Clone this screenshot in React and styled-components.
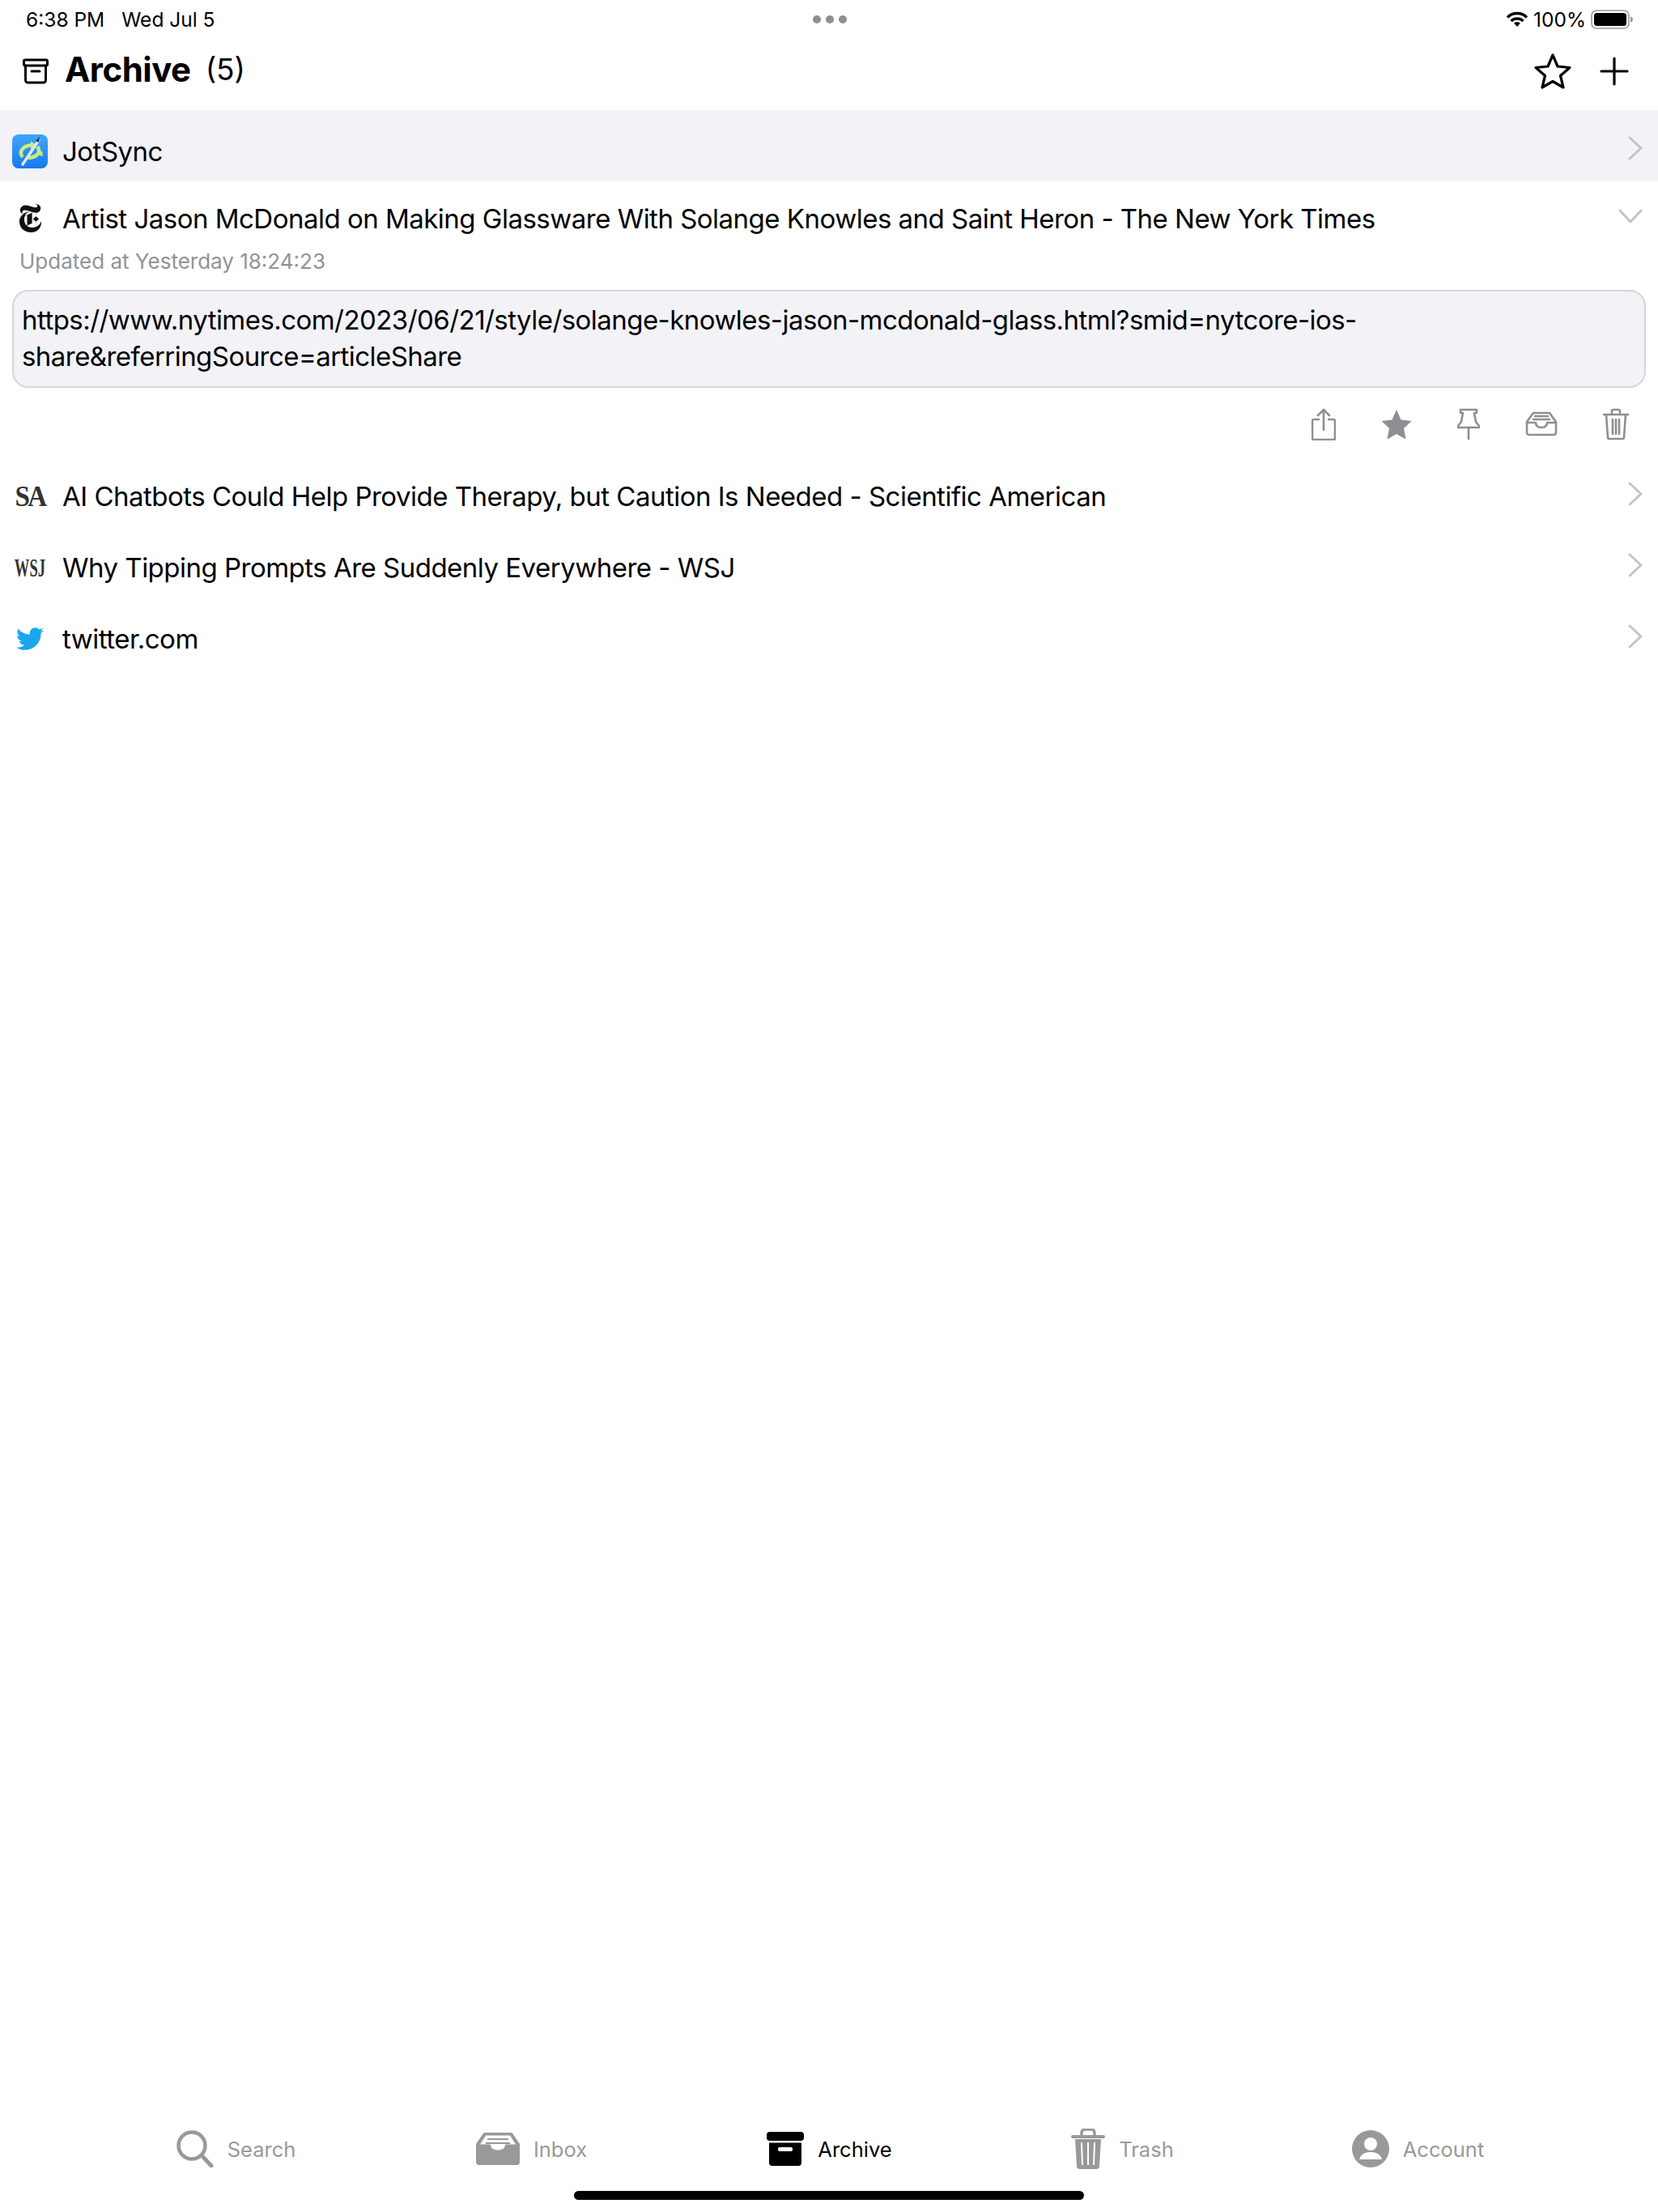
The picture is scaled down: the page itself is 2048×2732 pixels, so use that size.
import React from 'react';
import styled, { createGlobalStyle } from 'styled-components';
import { SiNewyorktimes } from 'react-icons/si';
import { FaTwitter } from 'react-icons/fa';

const Global = createGlobalStyle`
  html, body { margin: 0; padding: 0; background: #fff; }
  body { font-family: Inter, "Liberation Sans", sans-serif; color: #000; }
`;

const Page = styled.div`
  position: relative; width: 2048px; height: 2732px; display: flex; flex-direction: column; overflow: hidden;
`;
const StatusBar = styled.div`
  height: 48px; display: grid; grid-template-columns: 1fr auto 1fr; align-items: center;
  padding: 0 31px 0 32px; font-size: 24.5px;
`;
const StatusLeft = styled.div`display: flex; gap: 21px;`;
const Dots = styled.div`display: flex; gap: 6px;`;
const Dot = styled.span`width: 10px; height: 10px; border-radius: 50%; background: #8e8e93;`;
const StatusRight = styled.div`display: flex; justify-content: flex-end; align-items: center; gap: 6px;`;
const Header = styled.header`
  height: 88px; box-sizing: border-box; display: flex; align-items: center; padding: 0 36px 8px 28px;
`;
const TitleIcon = styled.svg`width: 32px; height: 38px; margin: 0 20px 3px 0;`;
const Title = styled.h1`margin: 0 0 6px; font-size: 42px; font-weight: 700; letter-spacing: -0.5px;`;
const Count = styled.span`margin: 0 0 6px 18px; font-size: 37px;`;
const HeaderActions = styled.div`margin-left: auto; display: flex; align-items: center; gap: 35px;`;
const List = styled.div`flex: 1; display: flex; flex-direction: column;`;
const Row = styled.div`
  height: 88px; box-sizing: border-box; display: flex; align-items: center;
  padding: ${p => p.$top || 0}px 19px 0 14px;
  background: ${p => p.$shaded ? '#f2f2f7' : '#fff'};
`;
const LogoSlot = styled.div`
  width: 46px; height: 46px; margin-right: 17px; display: flex; align-items: center; justify-content: center; flex: none;
`;
const RowTitle = styled.div`flex: 1; font-size: 33px; letter-spacing: -0.51px; white-space: nowrap;`;
const SerifLogo = styled.span`
  font-family: "Liberation Serif", serif; font-weight: 700; color: #333; font-size: ${p => p.$size}px;
  letter-spacing: ${p => p.$spacing}px; transform: scaleX(${p => p.$sx}); white-space: nowrap; line-height: 1;
`;
const Expanded = styled.div`display: flex; flex-direction: column; padding: 0 15px 0 15px;`;
const Updated = styled.div`margin: -6px 0 0 9px; font-size: 26px; color: #929297; height: 34px; line-height: 34px;`;
const UrlBox = styled.div`
  margin-top: 18px; height: 121px; box-sizing: border-box; padding: 13px 10px; border: 2px solid #d6d6da; border-radius: 20px;
  background: #f2f2f7; font-size: 33px; letter-spacing: -0.55px; line-height: 45px; white-space: nowrap;
`;
const Actions = styled.div`
  height: 90px; display: flex; justify-content: flex-end; align-items: center; gap: 56px; padding-right: 21px;
`;
const TabBar = styled.nav`
  height: 132px; display: grid; grid-template-columns: repeat(5, 365px); padding: 0 112px 0 109px;
`;
const Tab = styled.div`
  display: flex; align-items: center; justify-content: center; gap: 17px; height: 108px;
  padding-left: ${p => p.$active ? 6 : 0}px;
  font-size: 25.5px; color: ${p => p.$active ? '#000' : '#999'};
`;
const Home = styled.div`
  position: absolute; top: 2706px; left: 709px; width: 630px; height: 11px; border-radius: 6px; background: #000;
`;
const NavChevron = styled.svg`flex: none; margin-bottom: ${p => p.$lift ?? 6}px;`;

const grey = '#8e8e93';

const ChevronRight = ({ lift }) => (
  <NavChevron $lift={lift} width="18" height="30" viewBox="0 0 18 30" fill="none" stroke="#c4c4c6" strokeWidth="3" strokeLinecap="round" strokeLinejoin="round"><path d="M2 2l14 13L2 28" /></NavChevron>
);
const ChevronDown = () => (
  <NavChevron width="30" height="18" viewBox="0 0 30 18" fill="none" stroke="#c4c4c6" strokeWidth="3" strokeLinecap="round" strokeLinejoin="round"><path d="M2 2l13 14L28 2" /></NavChevron>
);

const JotSyncIcon = () => (
  <svg width="44" height="42" viewBox="0 0 44 42">
    <defs><linearGradient id="js" x1="0" y1="0" x2="0" y2="1"><stop offset="0" stopColor="#3fa6fb" /><stop offset="1" stopColor="#1579ee" /></linearGradient></defs>
    <rect width="44" height="42" rx="8" fill="url(#js)" />
    <path d="M13 28C8 22 12 14 25 13" fill="none" stroke="#c9ee7a" strokeWidth="4.500" />
    <path d="M23 8l7 5.500-7 4.500z" fill="#c9ee7a" />
    <path d="M31 15c5 6 1 13-11 14" fill="none" stroke="#c9ee7a" strokeWidth="4.500" />
    <path d="M31 25l6-5 1 7z" fill="#c9ee7a" />
    <path d="M33 7L13 37" stroke="#e4e7ee" strokeWidth="3.500" strokeLinecap="round" />
    <path d="M34 3l-1 7-4-2z" fill="#15306e" />
  </svg>
);

const StatusIcons = () => (
  <>
    <svg width="28" height="20" viewBox="0 0 28 20" fill="none" stroke="#000" strokeWidth="3.400">
      <path d="M2 7.500a17 17 0 0 1 24 0M6.500 12a11 11 0 0 1 15 0" />
      <path d="M10 14.500a6 6 0 0 1 8 0L14 19z" fill="#000" stroke="none" />
    </svg>
    <span>100%</span>
    <svg width="52" height="24" viewBox="0 0 52 24">
      <rect x="1" y="1" width="46" height="22" rx="6" fill="none" stroke="#999" strokeWidth="1.600" />
      <rect x="4" y="4" width="40" height="16" rx="3.500" fill="#000" />
      <path d="M49 8.500c2 .5 3 2 3 3.500s-1 3-3 3.500z" fill="#999" />
    </svg>
  </>
);

const ActionIcon = ({ children, w = 36 }) => (
  <svg width={w} height="40" viewBox={`0 0 ${w} 40`} fill="none" stroke={grey} strokeWidth="2.600" strokeLinecap="round" strokeLinejoin="round">{children}</svg>
);

const TabIcon = ({ w, h, children }) => (
  <svg width={w} height={h} viewBox={`0 0 ${w} ${h}`}>{children}</svg>
);

const items = [
  { label: 'Search', w: 46, h: 46, icon: <g fill="none" stroke="#999" strokeLinecap="round"><circle cx="19" cy="19" r="16.500" strokeWidth="4.500" /><path d="M31 31l12 13" strokeWidth="5" /></g> },
  { label: 'Inbox', w: 54, h: 40, icon: <g fill="#999"><path d="M11 0h32a3 3 0 0 1 2.500 1.400L54 14v22a4 4 0 0 1-4 4H4a4 4 0 0 1-4-4V14L8.500 1.400A3 3 0 0 1 11 0z" /><path d="M12 3.500h30l7 11H36c0 5-4 7-9 7s-9-2-9-7H5z" fill="#fff" /><path d="M14 8h26M12 13h30" stroke="#999" strokeWidth="2" /></g> },
  { label: 'Archive', active: true, w: 46, h: 42, icon: <g fill="#000"><rect width="46" height="11" rx="4" /><path d="M3 13.500h40V38a4 4 0 0 1-4 4H7a4 4 0 0 1-4-4z" /><rect x="14" y="19" width="18" height="5" rx="2" fill="#fff" /></g> },
  { label: 'Trash', w: 42, h: 50, icon: <g fill="#999"><path d="M13 8V5a4 4 0 0 1 4-4h8a4 4 0 0 1 4 4v3" fill="none" stroke="#999" strokeWidth="3.500" /><rect y="8" width="42" height="4" rx="2" /><path d="M5 13h32l-2 33a4 4 0 0 1-4 4H11a4 4 0 0 1-4-4z" /><path d="M13 17l1 28M21 17v28M29 17l-1 28" stroke="#fff" strokeWidth="2" /></g> },
  { label: 'Account', w: 46, h: 46, icon: <g><circle cx="23" cy="23" r="23" fill="#999" /><circle cx="23" cy="17" r="8" fill="#fff" /><path d="M9 36c2-7 8-9 14-9s12 2 14 9z" fill="#fff" /></g> },
];

export default function App() {
  return (
    <Page>
      <Global />
      <StatusBar>
        <StatusLeft><span>6:38 PM</span><span>Wed Jul 5</span></StatusLeft>
        <Dots><Dot /><Dot /><Dot /></Dots>
        <StatusRight><StatusIcons /></StatusRight>
      </StatusBar>
      <Header>
        <TitleIcon viewBox="0 0 32 38" fill="none" stroke="#000" strokeWidth="3" strokeLinejoin="round" strokeLinecap="round">
          <rect x="1.500" y="6" width="29" height="7" rx="1.500" />
          <path d="M3.500 13v18a3 3 0 0 0 3 3h19a3 3 0 0 0 3-3V13M11 20h10" />
        </TitleIcon>
        <Title>Archive</Title>
        <Count>(5)</Count>
        <HeaderActions>
          <svg width="46" height="46" viewBox="0 0 46 46" fill="none" stroke="#000" strokeWidth="3.200" strokeLinejoin="round"><path d="M23 3l6 14 15 1.500-11.500 10L36 43l-13-7.500L10 43l3.500-14.500L2 18.500 17 17z" /></svg>
          <svg width="36" height="36" viewBox="0 0 36 36" stroke="#000" strokeWidth="3.200" strokeLinecap="round"><path d="M18 2v32M2 18h32" /></svg>
        </HeaderActions>
      </Header>
      <List>
        <Row $shaded $top={13}>
          <LogoSlot><JotSyncIcon /></LogoSlot>
          <RowTitle>JotSync</RowTitle>
          <ChevronRight lift={7} />
        </Row>
        <Row $top={3}>
          <LogoSlot><SiNewyorktimes size={35} color="#111" /></LogoSlot>
          <RowTitle>Artist Jason McDonald on Making Glassware With Solange Knowles and Saint Heron - The New York Times</RowTitle>
          <ChevronDown />
        </Row>
        <Expanded>
          <Updated>Updated at Yesterday 18:24:23</Updated>
          <UrlBox>https://www.nytimes.com/2023/06/21/style/solange-knowles-jason-mcdonald-glass.html?smid=nytcore-ios-<br />share&amp;referringSource=articleShare</UrlBox>
          <Actions>
            <ActionIcon w={30}>
              <path d="M9 14H3a2 2 0 0 0-2 2v21a2 2 0 0 0 2 2h24a2 2 0 0 0 2-2V16a2 2 0 0 0-2-2h-6M15 27V2M8 9l7-7 7 7" />
            </ActionIcon>
            <ActionIcon w={38}>
              <path d="M19 2l5.500 12.500 13 1.500-9.500 9 2.500 13.500-11.500-6.500-11.500 6.500 2.500-13.500-9.500-9 13-1.500z" fill={grey} stroke="none" />
            </ActionIcon>
            <ActionIcon w={28}>
              <path d="M4 2h20v4h-3l2 11 4 5v2H1v-2l4-5 2-11H4zM14 24v14" />
            </ActionIcon>
            <ActionIcon w={40}>
              <path d="M10 6h20l8 11v13a3 3 0 0 1-3 3H5a3 3 0 0 1-3-3V17zM2 18h11c0 4 3 6 7 6s7-2 7-6h11M12 10h16M10 14h20" />
            </ActionIcon>
            <ActionIcon w={32}>
              <path d="M1 8h30M11 8V4a2 2 0 0 1 2-2h6a2 2 0 0 1 2 2v4M4 8l2 28a2 2 0 0 0 2 2h16a2 2 0 0 0 2-2l2-28M12 14v18M16 14v18M20 14v18" />
            </ActionIcon>
          </Actions>
        </Expanded>
        <Row>
          <LogoSlot><SerifLogo $size={36} $spacing={-3} $sx={0.92}>SA</SerifLogo></LogoSlot>
          <RowTitle>AI Chatbots Could Help Provide Therapy, but Caution Is Needed - Scientific American</RowTitle>
          <ChevronRight />
        </Row>
        <Row>
          <LogoSlot><SerifLogo $size={32} $spacing={0} $sx={0.58}>WSJ</SerifLogo></LogoSlot>
          <RowTitle>Why Tipping Prompts Are Suddenly Everywhere - WSJ</RowTitle>
          <ChevronRight />
        </Row>
        <Row>
          <LogoSlot><FaTwitter size={34} color="#1ca7ec" /></LogoSlot>
          <RowTitle>twitter.com</RowTitle>
          <ChevronRight />
        </Row>
      </List>
      <TabBar>
        {items.map(it => (
          <Tab key={it.label} $active={it.active}>
            <TabIcon w={it.w} h={it.h}>{it.icon}</TabIcon>
            <span>{it.label}</span>
          </Tab>
        ))}
      </TabBar>
      <Home />
    </Page>
  );
}
